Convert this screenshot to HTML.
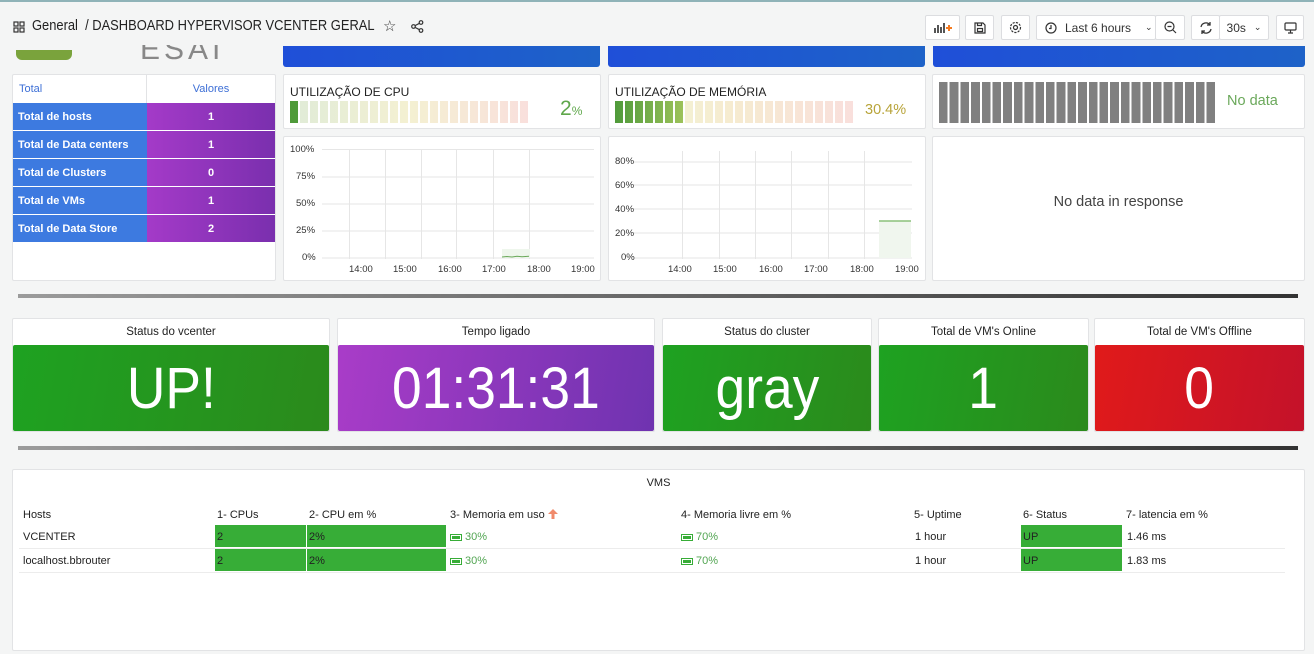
<!DOCTYPE html>
<html><head><meta charset="utf-8"><style>
*{box-sizing:border-box;margin:0;padding:0}
body{width:1314px;height:654px;background:#f4f5f5;font-family:"Liberation Sans",sans-serif;color:#222;position:relative;overflow:hidden}
.a{position:absolute}
.p{position:absolute;background:#fff;border:1px solid #e2e3e5;border-radius:2px}
.btn{position:absolute;top:15px;height:25px;border:1px solid #dcdde0;background:#fff;border-radius:2px;font-size:12px;color:#333;display:flex;align-items:center;justify-content:center}
.t{font-size:12px}
.tbl div{position:absolute;font-size:11px;font-weight:bold;color:#fff;display:flex;align-items:center}
.st .h{position:absolute;left:0;right:0;top:0;height:26px;font-size:11.5px;text-align:center;line-height:26px;color:#222}
.st .v{position:absolute;left:0;right:0;top:26px;bottom:0;color:#fff;font-size:58px;display:flex;align-items:center;justify-content:center;border-radius:2px}
.st .v span{display:inline-block;transform:scaleX(.92)}
.ax{position:absolute;font-size:9.5px;color:#333}
.vt{position:absolute;font-size:11px;color:#222;white-space:nowrap}
.g{background:#37ad37}
.bat{display:inline-block;width:12px;height:7px;border:1px solid #37ad37;background:#37ad37;box-shadow:inset 0 0 0 1px #fff;vertical-align:-1px}
</style></head><body>
<div class="a" style="left:0;top:0;width:1314px;height:2px;background:#8fb3b8"></div>
<svg class="a" style="left:13px;top:21px" width="12" height="12" viewBox="0 0 12 12" fill="none" stroke="#333" stroke-width="1.2"><rect x="1" y="1" width="4" height="4"/><rect x="7" y="1" width="4" height="4"/><rect x="1" y="7" width="4" height="4"/><rect x="7" y="7" width="4" height="4"/></svg>
<div class="a" style="left:32px;top:18px;font-size:14.5px;color:#222;white-space:nowrap;transform:scaleX(.89);transform-origin:left">General&nbsp; / DASHBOARD HYPERVISOR VCENTER GERAL</div>
<div class="a" style="left:383px;top:17px;font-size:15px;color:#333">☆</div>
<svg class="a" style="left:411px;top:20px" width="13" height="13" viewBox="0 0 13 13" fill="none" stroke="#333" stroke-width="1.2"><circle cx="10" cy="2.5" r="1.8"/><circle cx="2.5" cy="6.5" r="1.8"/><circle cx="10" cy="10.5" r="1.8"/><path d="M4 5.6L8.5 3.3M4 7.4L8.5 9.7"/></svg>
<div class="btn" style="left:925px;width:35px"><svg width="18" height="12" viewBox="0 0 18 12"><path d="M1 11V6M4 11V3M7 11V5M10 11V1" stroke="#555" stroke-width="2"/><path d="M12 6h6M15 3v6" stroke="#f47a20" stroke-width="2"/></svg></div>
<div class="btn" style="left:965px;width:29px"><svg width="12" height="12" viewBox="0 0 12 12" fill="none" stroke="#333" stroke-width="1.2"><path d="M1 1h8l2 2v8H1z"/><rect x="3.5" y="6.5" width="5" height="3"/><path d="M3.5 1v2.5h4V1"/></svg></div>
<div class="btn" style="left:1001px;width:29px"><svg width="13" height="13" viewBox="0 0 13 13" fill="none" stroke="#333" stroke-width="1.2"><circle cx="6.5" cy="6.5" r="2"/><circle cx="6.5" cy="6.5" r="5" stroke-dasharray="2.2 1.2"/></svg></div>
<div class="btn" style="left:1036px;width:120px;justify-content:flex-start;padding-left:8px"><svg width="12" height="12" viewBox="0 0 12 12" fill="none" stroke="#333" stroke-width="1.2"><circle cx="6" cy="6" r="5"/><path d="M6 3v3.5H4"/></svg><span style="margin-left:8px">Last 6 hours</span><span style="margin-left:14px;font-size:9px">⌄</span></div>
<div class="btn" style="left:1155px;width:30px"><svg width="13" height="13" viewBox="0 0 13 13" fill="none" stroke="#333" stroke-width="1.2"><circle cx="5.5" cy="5.5" r="4.5"/><path d="M3.5 5.5h4M9 9l3 3"/></svg></div>
<div class="btn" style="left:1191px;width:29px"><svg width="14" height="14" viewBox="0 0 14 14" fill="none" stroke="#333" stroke-width="1.3"><path d="M2 6a5 5 0 0 1 9-2M12 8a5 5 0 0 1-9 2M11 1v3H8M3 13v-3h3"/></svg></div>
<div class="btn" style="left:1219px;width:50px">30s<span style="margin-left:8px;font-size:9px">⌄</span></div>
<div class="btn" style="left:1276px;width:28px"><svg width="13" height="12" viewBox="0 0 13 12" fill="none" stroke="#333" stroke-width="1.2"><rect x="1" y="1" width="11" height="7" rx="1"/><path d="M4 11h5M6.5 8v3"/></svg></div>

<div class="a" style="left:16px;top:50px;width:56px;height:10px;background:#7aa33c;border-radius:0 0 6px 6px"></div>
<div class="a" style="left:140px;top:45px;width:80px;height:16px;overflow:hidden"><div style="margin-top:-12px;font-size:30px;color:#888;letter-spacing:4px">ESAI</div></div>
<div class="a" style="left:283px;top:46px;width:317px;height:21px;background:linear-gradient(90deg,#1f4fd8,#1e62c8);border-radius:0 0 3px 3px"></div>
<div class="a" style="left:608px;top:46px;width:317px;height:21px;background:linear-gradient(90deg,#1f4fd8,#1e62c8);border-radius:0 0 3px 3px"></div>
<div class="a" style="left:933px;top:46px;width:372px;height:21px;background:linear-gradient(90deg,#1f4fd8,#1e62c8);border-radius:0 0 3px 3px"></div>

<div class="p tbl" style="left:12px;top:74px;width:264px;height:207px">
<div style="left:0;top:0;width:134px;height:28px;color:#3d6fd6;font-weight:normal;padding-left:6px;border-right:1px solid #e2e3e5">Total</div>
<div style="left:134px;top:0;width:128px;height:28px;color:#3d6fd6;font-weight:normal;justify-content:center">Valores</div>
<div style="left:0;top:28px;width:134px;height:27px;background:#3d7ae0;padding-left:5px">Total de hosts</div>
<div style="left:134px;top:28px;width:128px;height:27px;background:linear-gradient(90deg,#a43ac8,#7a2fae);justify-content:center">1</div>
<div style="left:0;top:56px;width:134px;height:27px;background:#3d7ae0;padding-left:5px">Total de Data centers</div>
<div style="left:134px;top:56px;width:128px;height:27px;background:linear-gradient(90deg,#a43ac8,#7a2fae);justify-content:center">1</div>
<div style="left:0;top:84px;width:134px;height:27px;background:#3d7ae0;padding-left:5px">Total de Clusters</div>
<div style="left:134px;top:84px;width:128px;height:27px;background:linear-gradient(90deg,#a43ac8,#7a2fae);justify-content:center">0</div>
<div style="left:0;top:112px;width:134px;height:27px;background:#3d7ae0;padding-left:5px">Total de VMs</div>
<div style="left:134px;top:112px;width:128px;height:27px;background:linear-gradient(90deg,#a43ac8,#7a2fae);justify-content:center">1</div>
<div style="left:0;top:140px;width:134px;height:27px;background:#3d7ae0;padding-left:5px">Total de Data Store</div>
<div style="left:134px;top:140px;width:128px;height:27px;background:linear-gradient(90deg,#a43ac8,#7a2fae);justify-content:center">2</div>
</div>

<div class="p" style="left:283px;top:74px;width:318px;height:55px">
<div class="a t" style="left:6px;top:10px">UTILIZAÇÃO DE CPU</div>
<div class="a" style="left:6px;top:26px;width:239px;height:22px;background:repeating-linear-gradient(90deg,transparent 0 8px,#fff 8px 10px),linear-gradient(90deg,#4f9a3a 0 8px,#e1ecd7 8px,#f4f0d2 50%,#f9dfdc)"></div>
<div class="a" style="left:276px;top:22px;font-size:21px;color:#5fa74b">2<span style="font-size:12px">%</span></div>
</div>
<div class="p" style="left:608px;top:74px;width:318px;height:55px">
<div class="a t" style="left:6px;top:10px">UTILIZAÇÃO DE MEMÓRIA</div>
<div class="a" style="left:6px;top:26px;width:239px;height:22px;background:repeating-linear-gradient(90deg,transparent 0 8px,#fff 8px 10px),linear-gradient(90deg,#4f9a3a 0,#9cc25a 68px,#f4f0d2 70px,#f6ebd0 50%,#f9dfdc)"></div>
<div class="a" style="left:256px;top:27px;font-size:14.5px;color:#b8a43a">30.4%</div>
</div>
<div class="p" style="left:932px;top:74px;width:373px;height:55px">
<div class="a" style="left:6px;top:7px;width:278px;height:41px;background:repeating-linear-gradient(90deg,#808080 0 8.7px,transparent 8.7px 10.7px)"></div>
<div class="a" style="left:294px;top:18px;font-size:14.5px;color:#6aa85a">No data</div>
</div>

<div class="p" style="left:283px;top:136px;width:318px;height:145px">
<svg class="a" style="left:0;top:0" width="318" height="145">
<g stroke="#e6e6e6"><path d="M38 12.5H310M38 40H310M38 67H310M38 94H310M38 121H310"/><path d="M65.5 12V122M101.5 12V122M137.5 12V122M172.5 12V122M209.5 12V122M245.5 12V122"/></g>
<rect x="218" y="112" width="28" height="9" fill="#eef6ec"/><path d="M218 120l5-.5 5 .5 5-.7 5 .5 7-.5" stroke="#6aa85a" fill="none"/>
</svg>
<div class="ax" style="left:6px;top:7px">100%</div><div class="ax" style="left:12px;top:34px">75%</div><div class="ax" style="left:12px;top:61px">50%</div><div class="ax" style="left:12px;top:88px">25%</div><div class="ax" style="left:18px;top:115px">0%</div>
<div class="ax" style="left:65px;top:127px">14:00</div><div class="ax" style="left:109px;top:127px">15:00</div><div class="ax" style="left:154px;top:127px">16:00</div><div class="ax" style="left:198px;top:127px">17:00</div><div class="ax" style="left:243px;top:127px">18:00</div><div class="ax" style="left:287px;top:127px;width:24px;overflow:hidden">19:00</div>
</div>
<div class="p" style="left:608px;top:136px;width:318px;height:145px">
<svg class="a" style="left:0;top:0" width="318" height="145">
<g stroke="#e6e6e6"><path d="M24 25H303M24 48H303M24 72H303M24 96H303M24 121H303"/><path d="M73.5 14V122M110.5 14V122M146.5 14V122M182.5 14V122M219.5 14V122M255.5 14V122"/></g>
<rect x="270" y="84" width="32" height="37" fill="#f0f6ee"/><path d="M270 84H302" stroke="#8bc07a" stroke-width="1.5"/>
</svg>
<div class="ax" style="left:6px;top:19px">80%</div><div class="ax" style="left:6px;top:43px">60%</div><div class="ax" style="left:6px;top:67px">40%</div><div class="ax" style="left:6px;top:91px">20%</div><div class="ax" style="left:12px;top:115px">0%</div>
<div class="ax" style="left:59px;top:127px">14:00</div><div class="ax" style="left:104px;top:127px">15:00</div><div class="ax" style="left:150px;top:127px">16:00</div><div class="ax" style="left:195px;top:127px">17:00</div><div class="ax" style="left:241px;top:127px">18:00</div><div class="ax" style="left:286px;top:127px;width:24px;overflow:hidden">19:00</div>
</div>
<div class="p" style="left:932px;top:136px;width:373px;height:145px">
<div class="a" style="left:0;right:0;top:57px;text-align:center;font-size:14.5px;color:#444">No data in response</div>
</div>

<div class="a" style="left:18px;top:294px;width:1280px;height:4px;background:linear-gradient(90deg,#9b9b9b,#333)"></div>

<div class="p st" style="left:12px;top:318px;width:318px;height:114px"><div class="h">Status do vcenter</div><div class="v" style="background:linear-gradient(100deg,#1ea221,#2b8a1c)"><span>UP!</span></div></div>
<div class="p st" style="left:337px;top:318px;width:318px;height:114px"><div class="h">Tempo ligado</div><div class="v" style="background:linear-gradient(100deg,#a93cc8,#6f33b0)"><span>01:31:31</span></div></div>
<div class="p st" style="left:662px;top:318px;width:210px;height:114px"><div class="h">Status do cluster</div><div class="v" style="background:linear-gradient(100deg,#1ea221,#2b8a1c)"><span>gray</span></div></div>
<div class="p st" style="left:878px;top:318px;width:211px;height:114px"><div class="h">Total de VM's Online</div><div class="v" style="background:linear-gradient(100deg,#1ea221,#2b8a1c)"><span>1</span></div></div>
<div class="p st" style="left:1094px;top:318px;width:211px;height:114px"><div class="h">Total de VM's Offline</div><div class="v" style="background:linear-gradient(100deg,#e01a1a,#c4122a)"><span>0</span></div></div>

<div class="a" style="left:18px;top:446px;width:1280px;height:4px;background:linear-gradient(90deg,#9b9b9b,#333)"></div>

<div class="p" style="left:12px;top:469px;width:1293px;height:182px">
<div class="a" style="left:0;right:0;top:7px;text-align:center;font-size:11px">VMS</div>
<div class="vt" style="left:10px;top:39px">Hosts</div>
<div class="vt" style="left:204px;top:39px">1- CPUs</div>
<div class="vt" style="left:296px;top:39px">2- CPU em %</div>
<div class="vt" style="left:437px;top:39px">3- Memoria em uso <svg width="10" height="10" viewBox="0 0 10 10" style="vertical-align:-1px"><path d="M5 0L10 5H6.5V10H3.5V5H0z" fill="#f08a6b"/></svg></div>
<div class="vt" style="left:668px;top:39px">4- Memoria livre em %</div>
<div class="vt" style="left:901px;top:39px">5- Uptime</div>
<div class="vt" style="left:1010px;top:39px">6- Status</div>
<div class="vt" style="left:1113px;top:39px">7- latencia em %</div>
<div class="a" style="left:6px;top:78px;width:1266px;height:1px;background:#ececec"></div>
<div class="a" style="left:6px;top:102px;width:1266px;height:1px;background:#ececec"></div>
<div class="a g" style="left:202px;top:55px;width:91px;height:22px"></div><div class="a g" style="left:294px;top:55px;width:139px;height:22px"></div><div class="a g" style="left:1008px;top:55px;width:101px;height:22px"></div>
<div class="a g" style="left:202px;top:79px;width:91px;height:22px"></div><div class="a g" style="left:294px;top:79px;width:139px;height:22px"></div><div class="a g" style="left:1008px;top:79px;width:101px;height:22px"></div>
<div class="vt" style="left:10px;top:61px">VCENTER</div><div class="vt" style="left:204px;top:61px">2</div><div class="vt" style="left:296px;top:61px">2%</div>
<div class="vt" style="left:437px;top:61px;color:#52a552"><span class="bat"></span> 30%</div>
<div class="vt" style="left:668px;top:61px;color:#52a552"><span class="bat"></span> 70%</div>
<div class="vt" style="left:902px;top:61px">1 hour</div><div class="vt" style="left:1010px;top:61px">UP</div><div class="vt" style="left:1114px;top:61px">1.46 ms</div>
<div class="vt" style="left:10px;top:85px">localhost.bbrouter</div><div class="vt" style="left:204px;top:85px">2</div><div class="vt" style="left:296px;top:85px">2%</div>
<div class="vt" style="left:437px;top:85px;color:#52a552"><span class="bat"></span> 30%</div>
<div class="vt" style="left:668px;top:85px;color:#52a552"><span class="bat"></span> 70%</div>
<div class="vt" style="left:902px;top:85px">1 hour</div><div class="vt" style="left:1010px;top:85px">UP</div><div class="vt" style="left:1114px;top:85px">1.83 ms</div>
</div>
</body></html>
